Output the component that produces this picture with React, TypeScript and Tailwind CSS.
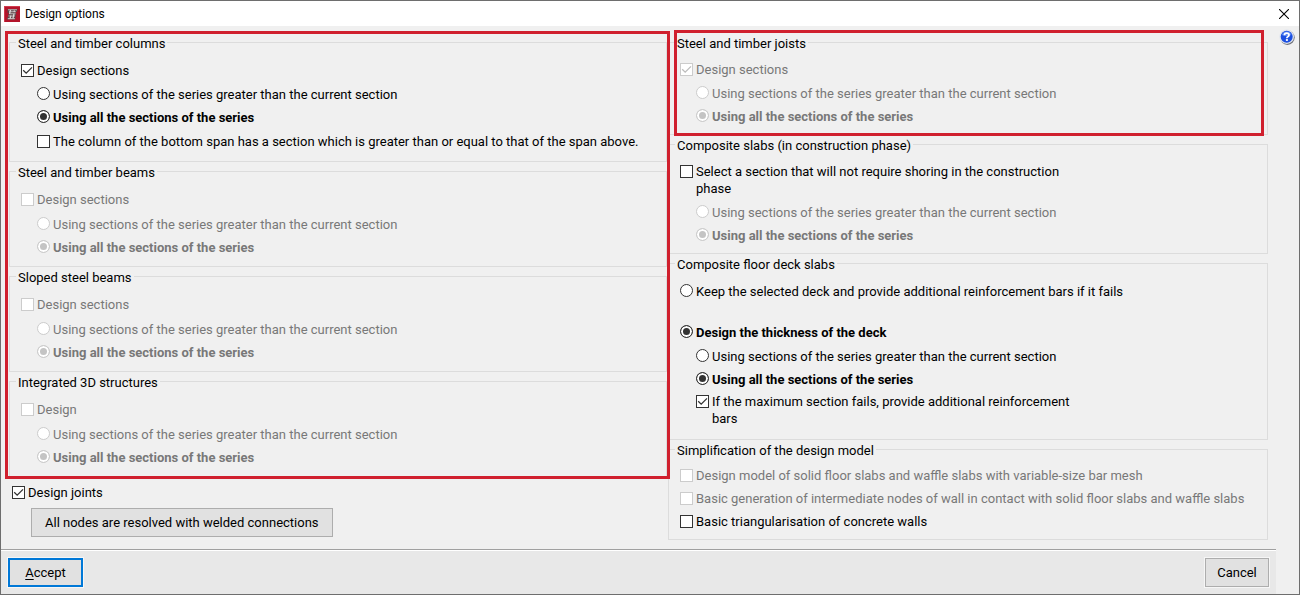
import { useState } from 'react'
import type { ReactNode } from 'react'

const SERIES_GREATER = 'Using sections of the series greater than the current section'
const SERIES_ALL = 'Using all the sections of the series'

function Group({ title, className, children }: { title: string; className: string; children: ReactNode }) {
  return (
    <fieldset className="min-w-0 border border-[#dcdcdc]">
      <legend className="ml-1.5 px-0.5 h-[17px] leading-[19px]">{title}</legend>
      <div className={`px-[11px] ${className}`}>{children}</div>
    </fieldset>
  )
}

type OptionProps = {
  label: string
  disabled?: boolean
  defaultChecked?: boolean
  className?: string
}

function Check({ label, disabled, defaultChecked, className = '' }: OptionProps) {
  return (
    <label className={`flex items-start gap-[3px] py-[3px] leading-[17px] ${disabled ? 'text-[#787878]' : ''} ${className}`}>
      <span className="grid shrink-0 mt-0.5">
        <input
          type="checkbox"
          disabled={disabled}
          defaultChecked={defaultChecked}
          className="peer col-start-1 row-start-1 appearance-none size-[13px] bg-white border border-[#333] disabled:border-[#ccc]"
        />
        <svg
          viewBox="0 0 13 13"
          className="col-start-1 row-start-1 size-[13px] invisible peer-checked:visible pointer-events-none text-[#333] peer-disabled:text-[#bcbcbc]"
        >
          <path d="M2.2 6.2 L5.2 9.2 L11 3.4" fill="none" stroke="currentColor" strokeWidth="1.3" />
        </svg>
      </span>
      <span>{label}</span>
    </label>
  )
}

type RadioProps = {
  name: string
  value: string
  label: string
  selected: string
  onSelect: (value: string) => void
  disabled?: boolean
  className?: string
}

function Radio({ name, value, label, selected, onSelect, disabled, className = '' }: RadioProps) {
  const checked = selected === value
  return (
    <label
      className={`flex items-center gap-[3px] h-[23px] leading-[17px] ${checked ? 'font-bold' : ''} ${disabled ? 'text-[#787878]' : ''} ${className}`}
    >
      <input
        type="radio"
        name={name}
        value={value}
        checked={checked}
        disabled={disabled}
        onChange={() => onSelect(value)}
        className="appearance-none shrink-0 size-[13px] rounded-full bg-white border border-[#333] disabled:border-[#ccc] checked:bg-[#333] checked:disabled:bg-[#c4c4c4] checked:shadow-[inset_0_0_0_2px_#fff]"
      />
      <span className="pt-0.5">{label}</span>
    </label>
  )
}

function SeriesChoice({ name, disabled, className = '' }: { name: string; disabled?: boolean; className?: string }) {
  const [selected, setSelected] = useState('all')
  return (
    <div className={`pl-4 ${className}`}>
      <Radio name={name} value="greater" label={SERIES_GREATER} selected={selected} onSelect={setSelected} disabled={disabled} />
      <Radio name={name} value="all" label={SERIES_ALL} selected={selected} onSelect={setSelected} disabled={disabled} />
    </div>
  )
}

function AppIcon() {
  return (
    <svg viewBox="0 0 16 16" className="size-4">
      <rect width="16" height="16" fill="#b3142b" />
      <path d="M0 16 V0 H16 V1 H1 V16 Z" fill="#d03a4c" />
      <path d="M3.5 3 H13.5 L13 6 H11.5 L12.5 8.5 L11 10.5 H12 L11 13.5 H3 L3.5 11 H4.5 L4 9 L5 7 H3.5 Z" fill="#5b4548" />
      <path d="M4 3.8 H13 M5 5.8 H12 M5.5 7.8 H11.5 M4.5 10 H11 M3.8 12.6 H10.8" stroke="#bdb6b6" strokeWidth="1.1" fill="none" />
      <path d="M6.5 4 L5.5 8 M10.5 4.5 L10 6 M7 9.5 L6 12.5 M10 8 L9 12" stroke="#dedada" strokeWidth="1.2" />
    </svg>
  )
}

function HelpIcon() {
  return (
    <svg viewBox="0 0 16 16" className="size-4">
      <circle cx="8.4" cy="8.6" r="7.3" fill="#6d7078" />
      <circle cx="7.7" cy="7.7" r="7.3" fill="#dfe4ee" />
      <circle cx="7.7" cy="7.7" r="6" fill="#1c4fe0" />
      <path d="M2.8 6 A5.2 5.2 0 0 1 12.6 6 Q7.7 8 2.8 6" fill="#5485f4" />
      <path d="M5.4 6.2 Q5.4 4.1 7.7 4.1 Q10 4.1 10 6 Q10 7 8.7 7.7 Q7.9 8.1 7.9 9.2" fill="none" stroke="#fff" strokeWidth="1.8" />
      <rect x="6.9" y="10.1" width="2" height="1.8" fill="#fff" />
    </svg>
  )
}

export default function App() {
  const [deck, setDeck] = useState('thickness')

  return (
    <div className="min-h-screen flex flex-col border border-[#6e6e6e] bg-[#f0f0f0] text-black text-[13px] font-['Roboto','Noto_Sans',sans-serif]">
      {/* Title bar */}
      <header className="flex items-center justify-between h-[25px] pl-[3px] pr-[9px] bg-white">
        <div className="flex items-center gap-[5px]">
          <AppIcon />
          <h1 className="text-[12px] leading-4">Design options</h1>
        </div>
        <button type="button" aria-label="Close" className="p-px">
          <svg viewBox="0 0 10 10" className="size-2.5">
            <path d="M0 0 L10 10 M10 0 L0 10" stroke="#000" strokeWidth="1.1" />
          </svg>
        </button>
      </header>

      <div className="flex flex-1">
        <div className="flex flex-col flex-1 min-w-0">
          <main className="flex-1 grid grid-cols-[658fr_600fr] gap-px pt-2 px-2 pb-[9px]">
            <div>
              <div className="relative z-10 flex flex-col gap-px">
                <Group title="Steel and timber columns" className="pt-2 pb-2">
                  <Check label="Design sections" defaultChecked />
                  <SeriesChoice name="columns" />
                  <Check
                    label="The column of the bottom span has a section which is greater than or equal to that of the span above."
                    className="ml-4 mt-0.5"
                  />
                </Group>
                <Group title="Steel and timber beams" className="pt-2 pb-2">
                  <Check label="Design sections" disabled />
                  <SeriesChoice name="beams" disabled className="mt-px" />
                </Group>
                <Group title="Sloped steel beams" className="pt-2 pb-2">
                  <Check label="Design sections" disabled />
                  <SeriesChoice name="sloped" disabled className="mt-px" />
                </Group>
                <Group title="Integrated 3D structures" className="pt-2 pb-2">
                  <Check label="Design" disabled />
                  <SeriesChoice name="integrated" disabled className="mt-px" />
                </Group>
                <div className="absolute -left-1 -top-[3px] -right-[3px] -bottom-0.5 border-3 border-[#d0202e] pointer-events-none" />
              </div>

              <Check label="Design joints" defaultChecked className="mt-1 ml-[3px]" />
              <button type="button" className="mt-1 ml-[22px] h-[29px] px-[13px] border border-[#adadad] bg-[#e1e1e1]">
                All nodes are resolved with welded connections
              </button>
            </div>

            <div className="flex flex-col gap-px">
              <div className="relative">
                <Group title="Steel and timber joists" className="pt-[7px] pb-[7px]">
                  <Check label="Design sections" disabled defaultChecked />
                  <SeriesChoice name="joists" disabled />
                </Group>
                <div className="absolute left-1.5 -top-1 right-1 -bottom-px border-3 border-[#d0202e] pointer-events-none" />
              </div>
              <Group title="Composite slabs (in construction phase)" className="pt-[7px] pb-[7px]">
                <Check label="Select a section that will not require shoring in the construction phase" className="max-w-[400px]" />
                <SeriesChoice name="slabs" disabled />
              </Group>
              <Group title="Composite floor deck slabs" className="pt-[7px] pb-[9px]">
                <Radio
                  name="deck"
                  value="keep"
                  label="Keep the selected deck and provide additional reinforcement bars if it fails"
                  selected={deck}
                  onSelect={setDeck}
                />
                <Radio
                  name="deck"
                  value="thickness"
                  label="Design the thickness of the deck"
                  selected={deck}
                  onSelect={setDeck}
                  className="mt-[18px]"
                />
                <SeriesChoice name="deck-series" className="mt-px" />
                <Check
                  label="If the maximum section fails, provide additional reinforcement bars"
                  defaultChecked
                  className="ml-4 max-w-[400px]"
                />
              </Group>
              <Group title="Simplification of the design model" className="pt-1.5 pb-1.5">
                <Check label="Design model of solid floor slabs and waffle slabs with variable-size bar mesh" disabled />
                <Check label="Basic generation of intermediate nodes of wall in contact with solid floor slabs and waffle slabs" disabled />
                <Check label="Basic triangularisation of concrete walls" />
              </Group>
            </div>
          </main>

          {/* Dialog buttons */}
          <footer className="border-t border-[#a0a0a0] bg-[#e8e8e8]">
            <div className="flex justify-between border-t border-white p-[7px]">
              <button type="button" className="h-[29px] w-[75px] border-2 border-[#0078d7] bg-[#e1e1e1] outline outline-[#f6f6f6]">
                <span className="underline underline-offset-2">A</span>ccept
              </button>
              <button type="button" className="h-[29px] w-16 border border-[#adadad] bg-[#e1e1e1] outline outline-[#f6f6f6]">
                Cancel
              </button>
            </div>
          </footer>
        </div>

        <aside className="w-[23px] shrink-0 pt-[3px] pl-[3px]">
          <button type="button" aria-label="Help" className="block">
            <HelpIcon />
          </button>
        </aside>
      </div>
    </div>
  )
}
